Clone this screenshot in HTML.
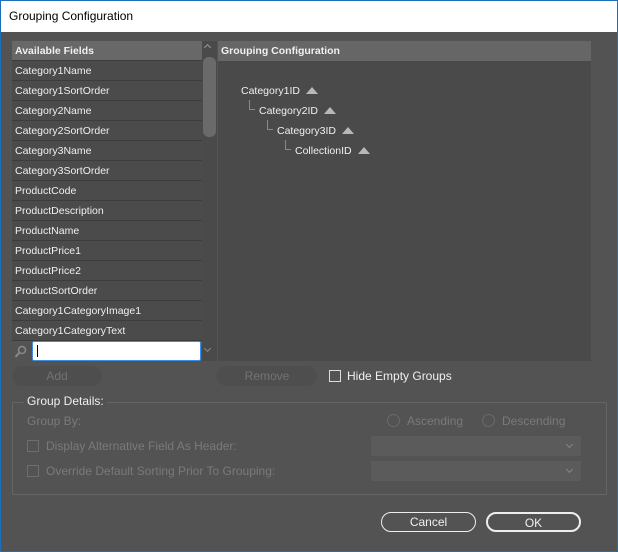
<!DOCTYPE html>
<html><head><style>
*{box-sizing:border-box;margin:0;padding:0}
body{width:618px;height:552px;overflow:hidden;font-family:"Liberation Sans",sans-serif;background:#535353;position:relative}
.win{position:absolute;left:0;top:0;width:618px;height:552px;background:#535353}
.frame{position:absolute;left:0;top:0;width:618px;height:552px;border:1px solid #1c6fb8}
.title{position:absolute;left:0;top:0;width:618px;height:32px;background:#fff;color:#000;font-size:12px;padding:9px 0 0 9px}
.a{position:absolute}
.list{left:12px;top:41px;width:190px;height:300px;background:#4b4b4b}
.row{height:20px;border-bottom:1px solid #3c3c3c;color:#f0f0f0;font-size:10.5px;padding:4px 0 0 3px;white-space:nowrap}
.hdr{background:#686868;font-weight:bold;border-bottom:1px solid #3c3c3c}
.sb{left:202px;top:41px;width:15px;height:320px;background:#4a4a4a}
.thumb{left:203px;top:57px;width:13px;height:80px;background:#6a6a6a;border-radius:6px}
.rp{left:218px;top:41px;width:373px;height:320px;background:#4a4a4a}
.rph{height:20px;background:#666;color:#f0f0f0;font-size:10.5px;font-weight:bold;padding:4px 0 0 3px}
.t{color:#f0f0f0;font-size:10.5px;position:absolute;white-space:nowrap}
.tri{display:inline-block;width:0;height:0;border-left:6px solid transparent;border-right:6px solid transparent;border-bottom:7px solid #b8b8b8;margin-left:6px;vertical-align:0px}
.ln{position:absolute;border-left:1px solid #8a8a8a;border-bottom:1px solid #8a8a8a;width:6px;height:10px}
.btn{position:absolute;border-radius:10px;background:#4e4e4e;color:#737373;font-size:12px;text-align:center;padding-top:3px}
.lbl{position:absolute;font-size:12px;color:#7a7a7a;white-space:nowrap}
.cb{position:absolute;width:12px;height:12px;border:1px solid #6e6e6e}
.rad{position:absolute;width:13px;height:13px;border:1px solid #6a6a6a;border-radius:50%}
.dd{position:absolute;left:371px;width:210px;height:20px;background:#5b5b5b;border-radius:2px}
.dd:after{content:"";position:absolute;right:9px;top:6px;width:4px;height:4px;border-right:1px solid #888;border-bottom:1px solid #888;transform:rotate(45deg)}
.ob{position:absolute;border:1.5px solid #eee;border-radius:10px;color:#f0f0f0;font-size:12px;text-align:center;padding-top:2px;height:20px}
</style></head><body><div class="win">
<div class="title">Grouping Configuration</div>
<div class="a list">
<div class="row hdr">Available Fields</div>
<div class="row">Category1Name</div><div class="row">Category1SortOrder</div><div class="row">Category2Name</div><div class="row">Category2SortOrder</div><div class="row">Category3Name</div><div class="row">Category3SortOrder</div><div class="row">ProductCode</div><div class="row">ProductDescription</div><div class="row">ProductName</div><div class="row">ProductPrice1</div><div class="row">ProductPrice2</div><div class="row">ProductSortOrder</div><div class="row">Category1CategoryImage1</div><div class="row">Category1CategoryText</div>
</div>
<div class="a sb"></div><div class="a thumb"></div>
<div class="a" style="left:205px;top:45px;width:5px;height:5px;border-left:1px solid #999;border-top:1px solid #999;transform:rotate(45deg)"></div>
<div class="a" style="left:205px;top:346px;width:5px;height:5px;border-right:1px solid #888;border-bottom:1px solid #888;transform:rotate(45deg)"></div>
<div class="a rp"><div class="rph">Grouping Configuration</div>
<div class="t" style="left:23px;top:44px">Category1ID<span class="tri"></span></div>
<div class="ln" style="left:31px;top:59px"></div>
<div class="t" style="left:41px;top:64px">Category2ID<span class="tri"></span></div>
<div class="ln" style="left:49px;top:79px"></div>
<div class="t" style="left:59px;top:84px">Category3ID<span class="tri"></span></div>
<div class="ln" style="left:67px;top:99px"></div>
<div class="t" style="left:77px;top:104px">CollectionID<span class="tri"></span></div>
</div>
<svg class="a" style="left:14px;top:345px" width="14" height="14"><circle cx="8" cy="5" r="3.5" fill="none" stroke="#8a8a8a" stroke-width="1.5"/><line x1="5.5" y1="7.5" x2="1.5" y2="12" stroke="#8a8a8a" stroke-width="2"/></svg>
<div class="a" style="left:32px;top:341px;width:169px;height:20px;background:#fff;border:1px solid #3d8ee0;border-radius:2px"><div style="position:absolute;left:4px;top:3px;width:1px;height:12px;background:#000"></div></div>
<div class="btn" style="left:12px;top:366px;width:90px;height:20px">Add</div>
<div class="btn" style="left:217px;top:366px;width:100px;height:20px">Remove</div>
<div class="cb" style="left:329px;top:370px;border-color:#ddd"></div>
<div class="lbl" style="left:347px;top:369px;color:#f0f0f0">Hide Empty Groups</div>
<div class="a" style="left:12px;top:402px;width:595px;height:93px;border:1px solid #656565;border-radius:2px"></div>
<div class="lbl" style="left:24px;top:394px;color:#f0f0f0;background:#535353;padding:0 3px">Group Details:</div>
<div class="lbl" style="left:27px;top:414px">Group By:</div>
<div class="rad" style="left:387px;top:414px"></div><div class="lbl" style="left:407px;top:414px">Ascending</div>
<div class="rad" style="left:482px;top:414px"></div><div class="lbl" style="left:502px;top:414px">Descending</div>
<div class="cb" style="left:27px;top:440px"></div><div class="lbl" style="left:46px;top:439px">Display Alternative Field As Header:</div>
<div class="cb" style="left:27px;top:465px"></div><div class="lbl" style="left:46px;top:464px">Override Default Sorting Prior To Grouping:</div>
<div class="dd" style="top:436px"></div><div class="dd" style="top:461px"></div>
<div class="ob" style="left:381px;top:512px;width:95px">Cancel</div>
<div class="ob" style="left:486px;top:512px;width:95px;border-width:2px">OK</div>
<div class="frame"></div>
</div></body></html>
